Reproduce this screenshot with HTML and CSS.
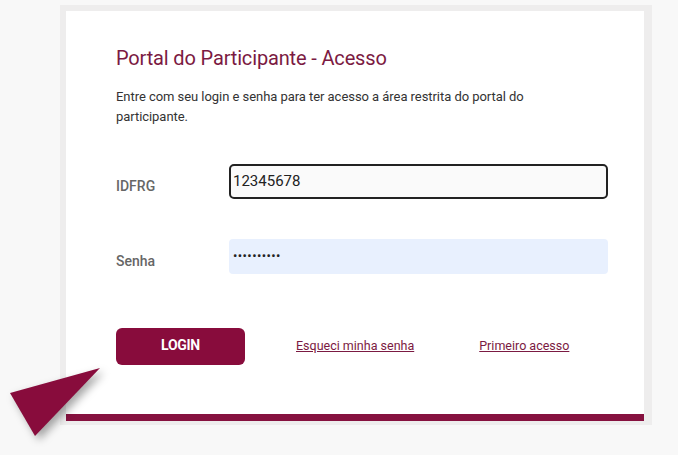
FILE: index.html
```html
<!DOCTYPE html>
<html lang="pt">
<head>
<meta charset="utf-8">
<link rel="stylesheet" href="styles.css">
</head>
<body>
<div class="page">
  <div class="frame">
    <div class="card">
      <h1 class="title">Portal do Participante - Acesso</h1>
      <p class="intro">Entre com seu login e senha para ter acesso a área restrita do portal do participante.</p>
      <div class="row">
        <label class="label">IDFRG</label>
        <div class="input input-focus">12345678</div>
      </div>
      <div class="row row-second">
        <label class="label">Senha</label>
        <div class="input input-fill">••••••••••</div>
      </div>
      <div class="actions">
        <button class="btn">LOGIN</button>
        <a class="link link-first" href="#">Esqueci minha senha</a>
        <a class="link link-second" href="#">Primeiro acesso</a>
      </div>
    </div>
    <div class="bar"></div>
  </div>
</div>
<svg class="pointer" width="110" height="80" viewBox="0 0 110 80">
  <polygon points="10,33 100,8 35,76" fill="#880c3c"/>
</svg>
</body>
</html>
```
FILE: styles.css
```css
html, body {
  margin: 0;
  padding: 0;
}
body {
  background: #f8f8f8;
  font-family: Roboto, "Liberation Sans", sans-serif;
  width: 678px;
  height: 455px;
  overflow: hidden;
  position: relative;
}
.page {
  padding: 5px 0 0 60px;
}
.frame {
  width: 578px;
  background: #eeeded;
  padding: 6px 8px 4px 6px;
}
.card {
  background: #fff;
  padding: 34px 36px 49px 50px;
}
.title {
  margin: 0;
  font-size: 20px;
  font-weight: 400;
  line-height: 26px;
  letter-spacing: -0.15px;
  color: #7b1a42;
}
.intro {
  margin: 16px 0 0;
  font-size: 13px;
  line-height: 20px;
  letter-spacing: -0.05px;
  color: #333;
  width: 440px;
}
.row {
  display: flex;
  align-items: center;
  margin-top: 37px;
}
.row-second {
  margin-top: 40px;
}
.label {
  width: 113px;
  font-size: 14px;
  font-weight: 500;
  color: #666;
  padding-top: 8px;
}
.input {
  box-sizing: border-box;
  width: 379px;
  height: 35px;
  font-size: 15px;
  color: #222;
  display: flex;
  align-items: center;
  padding-left: 3px;
}
.input-focus {
  background: #fafafa;
  border: 2px solid #222;
  border-radius: 5px;
  padding-left: 2px;
  padding-bottom: 2px;
}
.input-fill {
  background: #e8f0fe;
  border-radius: 4px;
  font-size: 13px;
  letter-spacing: 0.4px;
  padding-left: 4px;
  padding-bottom: 2px;
}
.actions {
  display: flex;
  align-items: center;
  margin-top: 54px;
}
.btn {
  width: 129px;
  height: 37px;
  background: #880c3c;
  color: #fff;
  border: none;
  border-radius: 6px;
  font-family: Roboto, "Liberation Sans", sans-serif;
  font-weight: 700;
  font-size: 14px;
  letter-spacing: -0.3px;
  padding: 0 0 3px;
}
.link {
  font-size: 12.5px;
  color: #7b1a42;
  text-decoration: underline;
  margin-top: -2px;
}
.link-first {
  margin-left: 51px;
}
.link-second {
  margin-left: 65px;
}
.bar {
  height: 7px;
  background: #86113f;
}
.pointer {
  position: absolute;
  left: 0;
  top: 360px;
  filter: drop-shadow(4px 4px 4px rgba(0,0,0,0.35));
}
```
